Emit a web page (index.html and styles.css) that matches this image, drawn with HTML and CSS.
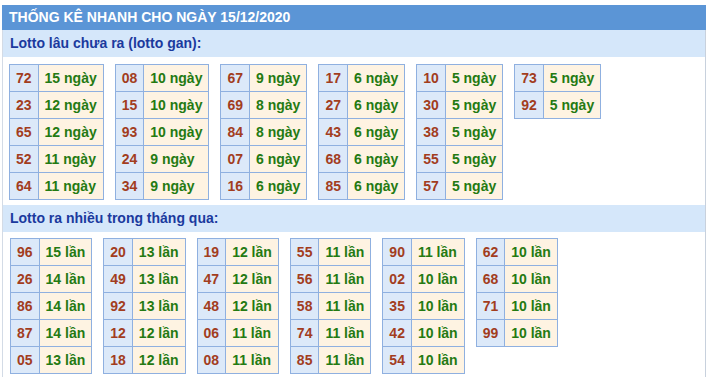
FILE: index.html
```html
<!DOCTYPE html>
<html lang="vi">
<head>
<meta charset="utf-8">
<link rel="stylesheet" href="styles.css">
</head>
<body>
<div class="box">
  <div class="title">THỐNG KÊ NHANH CHO NGÀY 15/12/2020</div>
  <div class="sub">Lotto lâu chưa ra (lotto gan):</div>
  <div class="grid g1">
    <table><tr><td class="n">72</td><td class="d">15 ngày</td></tr><tr><td class="n">23</td><td class="d">12 ngày</td></tr><tr><td class="n">65</td><td class="d">12 ngày</td></tr><tr><td class="n">52</td><td class="d">11 ngày</td></tr><tr><td class="n">64</td><td class="d">11 ngày</td></tr></table>
    <table><tr><td class="n">08</td><td class="d">10 ngày</td></tr><tr><td class="n">15</td><td class="d">10 ngày</td></tr><tr><td class="n">93</td><td class="d">10 ngày</td></tr><tr><td class="n">24</td><td class="d">9 ngày</td></tr><tr><td class="n">34</td><td class="d">9 ngày</td></tr></table>
    <table><tr><td class="n">67</td><td class="d">9 ngày</td></tr><tr><td class="n">69</td><td class="d">8 ngày</td></tr><tr><td class="n">84</td><td class="d">8 ngày</td></tr><tr><td class="n">07</td><td class="d">6 ngày</td></tr><tr><td class="n">16</td><td class="d">6 ngày</td></tr></table>
    <table><tr><td class="n">17</td><td class="d">6 ngày</td></tr><tr><td class="n">27</td><td class="d">6 ngày</td></tr><tr><td class="n">43</td><td class="d">6 ngày</td></tr><tr><td class="n">68</td><td class="d">6 ngày</td></tr><tr><td class="n">85</td><td class="d">6 ngày</td></tr></table>
    <table><tr><td class="n">10</td><td class="d">5 ngày</td></tr><tr><td class="n">30</td><td class="d">5 ngày</td></tr><tr><td class="n">38</td><td class="d">5 ngày</td></tr><tr><td class="n">55</td><td class="d">5 ngày</td></tr><tr><td class="n">57</td><td class="d">5 ngày</td></tr></table>
    <table><tr><td class="n">73</td><td class="d">5 ngày</td></tr><tr><td class="n">92</td><td class="d">5 ngày</td></tr></table>
  </div>
  <div class="sub">Lotto ra nhiều trong tháng qua:</div>
  <div class="grid g2">
    <table><tr><td class="n">96</td><td class="d">15 lần</td></tr><tr><td class="n">26</td><td class="d">14 lần</td></tr><tr><td class="n">86</td><td class="d">14 lần</td></tr><tr><td class="n">87</td><td class="d">14 lần</td></tr><tr><td class="n">05</td><td class="d">13 lần</td></tr></table>
    <table><tr><td class="n">20</td><td class="d">13 lần</td></tr><tr><td class="n">49</td><td class="d">13 lần</td></tr><tr><td class="n">92</td><td class="d">13 lần</td></tr><tr><td class="n">12</td><td class="d">12 lần</td></tr><tr><td class="n">18</td><td class="d">12 lần</td></tr></table>
    <table><tr><td class="n">19</td><td class="d">12 lần</td></tr><tr><td class="n">47</td><td class="d">12 lần</td></tr><tr><td class="n">48</td><td class="d">12 lần</td></tr><tr><td class="n">06</td><td class="d">11 lần</td></tr><tr><td class="n">08</td><td class="d">11 lần</td></tr></table>
    <table><tr><td class="n">55</td><td class="d">11 lần</td></tr><tr><td class="n">56</td><td class="d">11 lần</td></tr><tr><td class="n">58</td><td class="d">11 lần</td></tr><tr><td class="n">74</td><td class="d">11 lần</td></tr><tr><td class="n">85</td><td class="d">11 lần</td></tr></table>
    <table><tr><td class="n">90</td><td class="d">11 lần</td></tr><tr><td class="n">02</td><td class="d">10 lần</td></tr><tr><td class="n">35</td><td class="d">10 lần</td></tr><tr><td class="n">42</td><td class="d">10 lần</td></tr><tr><td class="n">54</td><td class="d">10 lần</td></tr></table>
    <table><tr><td class="n">62</td><td class="d">10 lần</td></tr><tr><td class="n">68</td><td class="d">10 lần</td></tr><tr><td class="n">71</td><td class="d">10 lần</td></tr><tr><td class="n">99</td><td class="d">10 lần</td></tr></table>
  </div>
</div>
</body>
</html>
```
FILE: styles.css
```css
body {
  margin: 0;
  background: #fff;
  font-family: "Liberation Sans", Arial, sans-serif;
}
.box {
  margin: 5px 0 0 2px;
  width: 704px;
  box-sizing: border-box;
  border-left: 1px solid #d3dbe6;
  border-right: 1px solid #c8d1dd;
  height: 372px;
}
.title {
  height: 25px;
  line-height: 25px;
  margin: 0 -1px;
  padding-left: 7px;
  background: #5b95d6;
  color: #fff;
  font-size: 14px;
  font-weight: bold;
}
.sub {
  height: 27px;
  line-height: 27px;
  padding-left: 7px;
  background: #d5e7fa;
  color: #1b3a9e;
  font-size: 14px;
  font-weight: bold;
}
.grid {
  display: flex;
  align-items: flex-start;
  gap: 11px;
}
.g1 {
  padding: 7px 0 5px 6px;
}
.g2 {
  padding: 6px 0 0 7px;
}
table {
  border-collapse: collapse;
}
td {
  border: 1px solid #8fb0e0;
  height: 27px;
  padding: 0 6px;
  font-size: 14px;
  font-weight: bold;
  line-height: 16px;
  white-space: nowrap;
  box-sizing: border-box;
}
td.n {
  background: #dce9f9;
  color: #a23d1e;
}
td.d {
  background: #fef3e2;
  color: #247a12;
}
```
